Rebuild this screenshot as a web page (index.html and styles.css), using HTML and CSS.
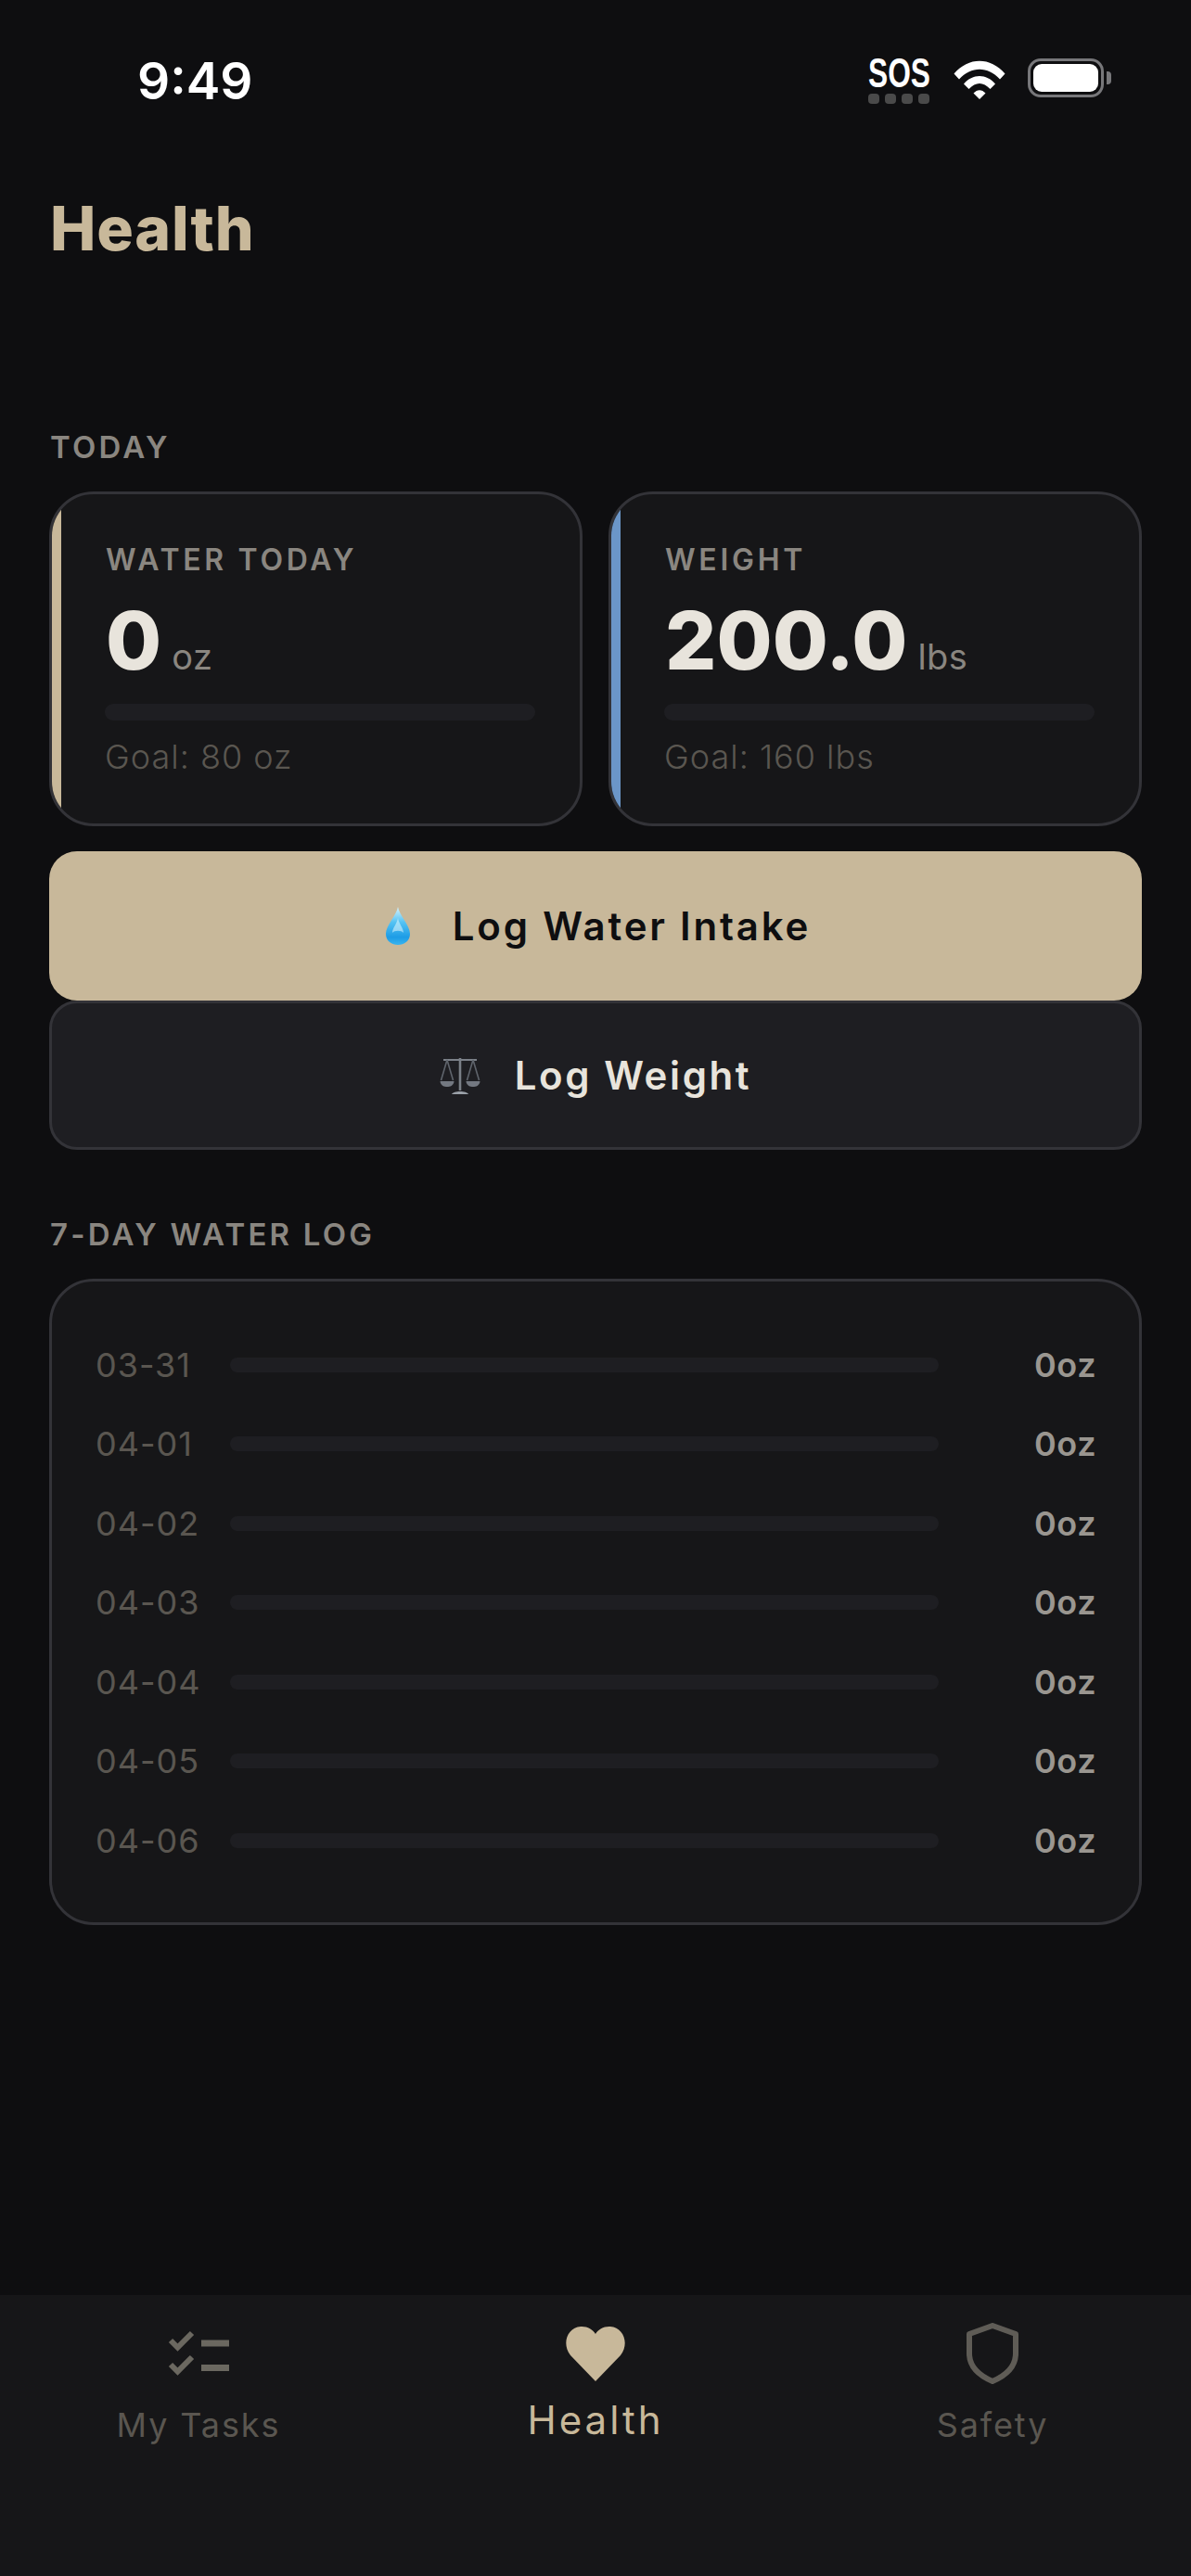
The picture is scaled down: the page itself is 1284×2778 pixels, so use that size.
FILE: index.html
```html
<!DOCTYPE html>
<html lang="en">
<head>
    <meta charset="UTF-8">
    <title>Health</title>
    <link rel="stylesheet" href="styles.css">
</head>
<body>
   <div class="screen">
      <header class="status">
        <span class="time">9:49</span>
        <div class="status-right">
          <div class="sos">
            <span class="sos-text">SOS</span>
            <div class="sos-dots"><i></i><i></i><i></i><i></i></div>
          </div>
          <svg class="wifi" width="56" height="42" viewBox="0 0 56 42">
            <path d="M0.5 14.5 C16 -4 40 -4 55.5 14.5 L50 20.5 C37 6 19 6 6 20.5 Z" fill="#fff"/>
            <path d="M11 25.5 C20.5 14 35.5 14 45 25.5 L39.5 31 C32 23 24 23 16.5 31 Z" fill="#fff"/>
            <path d="M21.5 35.5 C25.5 31 30.5 31 34.5 35.5 L28 42 Z" fill="#fff"/>
          </svg>
          <div class="battery"><div class="battery-fill"></div></div>
          <div class="battery-nub"></div>
        </div>
      </header>

      <h1 class="title">Health</h1>

      <main class="content">
        <h2 class="section-label">TODAY</h2>
        <div class="stats">
          <div class="stat stat-water">
            <div class="stat-label">WATER TODAY</div>
            <div class="stat-value">0<span class="stat-unit">oz</span></div>
            <div class="track"></div>
            <div class="stat-goal">Goal: 80 oz</div>
          </div>
          <div class="stat stat-weight">
            <div class="stat-label">WEIGHT</div>
            <div class="stat-value">200.0<span class="stat-unit">lbs</span></div>
            <div class="track"></div>
            <div class="stat-goal">Goal: 160 lbs</div>
          </div>
        </div>

        <button class="btn btn-primary" type="button">
          <svg width="28" height="42" viewBox="0 0 28 42">
            <defs>
              <linearGradient id="drop" x1="0" y1="0" x2="0" y2="1">
                <stop offset="0" stop-color="#d8f3fd"/>
                <stop offset="0.4" stop-color="#56c3f3"/>
                <stop offset="0.8" stop-color="#1c9ce6"/>
                <stop offset="1" stop-color="#3ab4ee"/>
              </linearGradient>
            </defs>
            <path d="M14 0 C15.500 9 27 20 27 29 C27 36.500 21 41 14 41 C7 41 1 36.500 1 29 C1 20 12.500 9 14 0 Z" fill="url(#drop)"/>
            <path d="M14 12 C15 18 20 23 20 28 C18 25 10 25 8 28 C8 23 13 18 14 12 Z" fill="#e4f7fe" opacity="0.55"/>
          </svg>
          <span>Log Water Intake</span>
        </button>
        <button class="btn btn-secondary" type="button">
          <svg width="44" height="44" viewBox="0 0 44 44" fill="none" stroke="#7b8088" stroke-width="1.6">
            <path d="M22 3 V38" stroke-width="2.600"/>
            <path d="M4 5 H40" stroke-width="2"/>
            <path d="M8 5 L1.500 27 M8 5 L14.500 27 M36 5 L29.500 27 M36 5 L42.500 27" stroke="#5f646c"/>
            <path d="M0.500 28 H15.500 C15 33 11 34 8 34 C5 34 1 33 0.500 28 Z" fill="#737881" stroke="none"/>
            <path d="M28.500 28 H43.500 C43 33 39 34 36 34 C33 34 29 33 28.500 28 Z" fill="#737881" stroke="none"/>
            <path d="M13 42 C15 38 29 38 31 42 Z" fill="#9aa0a8" stroke="none"/>
          </svg>
          <span>Log Weight</span>
        </button>

        <h2 class="section-label section-log">7-DAY WATER LOG</h2>
        <div class="log">
          <div class="log-row"><span class="log-date">03-31</span><div class="log-bar"></div><span class="log-val">0oz</span></div>
          <div class="log-row"><span class="log-date">04-01</span><div class="log-bar"></div><span class="log-val">0oz</span></div>
          <div class="log-row"><span class="log-date">04-02</span><div class="log-bar"></div><span class="log-val">0oz</span></div>
          <div class="log-row"><span class="log-date">04-03</span><div class="log-bar"></div><span class="log-val">0oz</span></div>
          <div class="log-row"><span class="log-date">04-04</span><div class="log-bar"></div><span class="log-val">0oz</span></div>
          <div class="log-row"><span class="log-date">04-05</span><div class="log-bar"></div><span class="log-val">0oz</span></div>
          <div class="log-row"><span class="log-date">04-06</span><div class="log-bar"></div><span class="log-val">0oz</span></div>
        </div>
      </main>

      <nav class="tabs">
        <div class="tab">
          <div class="tab-icon">
            <svg width="68" height="50" viewBox="0 0 68 50" fill="none" stroke="#6b6860" stroke-width="6">
              <path d="M4 11 L11.500 18.500 L27 3"/>
              <path d="M4 37 L11.500 44.500 L27 29"/>
              <path d="M37 14 H67 M37 40.500 H67" stroke-width="7"/>
            </svg>
          </div>
          <span class="tab-label">My Tasks</span>
        </div>
        <div class="tab tab-active">
          <div class="tab-icon">
            <svg width="66" height="60" viewBox="0 0 66 60">
              <path d="M33 60 L6 32 C-4 19 3 2 17 1 C24 0.500 30 4 33 9 C36 4 42 0.500 49 1 C63 2 70 19 60 32 Z" fill="#c8b89a"/>
            </svg>
          </div>
          <span class="tab-label">Health</span>
        </div>
        <div class="tab">
          <div class="tab-icon">
            <svg width="56" height="66" viewBox="0 0 56 66" fill="none" stroke="#5f5c56" stroke-width="6" stroke-linejoin="round">
              <path d="M28 3 L53 12 V33 C53 48 42 57 28 63 C14 57 3 48 3 33 V12 Z"/>
            </svg>
          </div>
          <span class="tab-label">Safety</span>
        </div>
      </nav>
   </div>
</body>
</html>
```

FILE: styles.css
```css
*{
  box-sizing: border-box;
}
body{
  margin: 0;
  background-color: #0e0e10;
  font-family: Inter, "Noto Sans", sans-serif;
}
.screen{
  width: 1284px;
  height: 2778px;
  display: flex;
  flex-direction: column;
  overflow: hidden;
}

/* barre de statut */
.status{
  height: 206px;
  padding: 54px 86px 0 148px;
  display: flex;
  justify-content: space-between;
  align-items: flex-start;
}
.time{
  color: #fff;
  font-size: 55px;
  font-weight: 600;
  line-height: 66px;
}
.status-right{
  display: flex;
  align-items: flex-start;
  padding-top: 9px;
}
.sos{
  width: 70px;
  margin-right: 22px;
}
.sos-text{
  display: block;
  color: #fff;
  font-family: "Liberation Sans", sans-serif;
  font-size: 44px;
  font-weight: 700;
  line-height: 32px;
  white-space: nowrap;
  transform: scaleX(0.72);
  transform-origin: left center;
}
.sos-dots{
  display: flex;
  gap: 6px;
  margin-top: 6px;
}
.sos-dots i{
  width: 12px;
  height: 11px;
  border-radius: 4px;
  background-color: #4a4a4a;
}
.wifi{
  margin-top: 2px;
  margin-right: 24px;
}
.battery{
  width: 82px;
  height: 42px;
  padding: 3px;
  border: 3px solid #77777a;
  border-radius: 14px;
}
.battery-fill{
  height: 30px;
  border-radius: 9px;
  background-color: #fff;
}
.battery-nub{
  width: 5px;
  height: 14px;
  margin: 14px 0 0 3px;
  border-radius: 0 4px 4px 0;
  background-color: #77777a;
}

.title{
  margin: 0;
  padding-left: 54px;
  color: #c8b89a;
  font-size: 66px;
  font-weight: 800;
  line-height: 80px;
  letter-spacing: 0.800px;
}

.content{
  padding: 0 53px;
}
.section-label{
  margin: 0 0 0 1px;
  color: #8a8680;
  font-size: 33px;
  font-weight: 600;
  line-height: 40px;
  letter-spacing: 3.200px;
}
.content > .section-label:first-child{
  margin-top: 176px;
}
.section-log{
  margin-top: 71px;
}

/* cartes */
.stats{
  display: grid;
  grid-template-columns: 1fr 1fr;
  gap: 28px;
  margin-top: 28px;
}
.stat{
  position: relative;
  height: 361px;
  padding: 52px 48px 0 58px;
  overflow: hidden;
  background-color: #161618;
  border: 3px solid #333338;
  border-radius: 48px;
}
.stat::before{
  content: "";
  position: absolute;
  left: 0;
  top: 0;
  bottom: 0;
  width: 10px;
}
.stat-water::before{
  background-color: #c8b89a;
}
.stat-weight::before{
  background-color: #6b96c8;
}
.stat-label{
  color: #8a8680;
  font-size: 32px;
  font-weight: 600;
  line-height: 38px;
  letter-spacing: 3.700px;
}
.stat-value{
  margin-top: 23px;
  color: #e8e4dc;
  font-size: 87px;
  font-weight: 800;
  line-height: 90px;
}
.stat-unit{
  margin-left: 11px;
  color: #8a8680;
  font-size: 38px;
  font-weight: 400;
  letter-spacing: 0.5px;
}
.track{
  height: 18px;
  margin-top: 6px;
  margin-left: -1px;
  border-radius: 9px;
  background-color: #1e1e22;
}
.stat-goal{
  margin-top: 17px;
  margin-left: -1px;
  color: #5a5650;
  font-size: 36px;
  font-weight: 300;
  line-height: 44px;
  letter-spacing: 1px;
}

/* boutons */
.btn{
  display: flex;
  align-items: center;
  justify-content: center;
  gap: 45px;
  width: 100%;
  height: 161px;
  padding: 0 0 0 5px;
  border-radius: 30px;
  font-family: inherit;
  font-size: 42px;
  font-weight: 600;
  letter-spacing: 2.800px;
}
.btn-primary{
  margin-top: 27px;
  color: #0e0e10;
  background-color: #c8b89a;
  border: 0;
}
.btn-secondary{
  gap: 37px;
  padding: 0;
  color: #e8e4dc;
  background-color: #1e1e22;
  border: 3px solid #333338;
  letter-spacing: 2.600px;
}

/* historique */
.log{
  height: 697px;
  margin-top: 28px;
  padding: 47px 46px 46px 47px;
  background-color: #161618;
  border: 3px solid #333338;
  border-radius: 48px;
}
.log-row{
  display: flex;
  align-items: center;
  height: 85.500px;
}
.log-date{
  width: 145px;
  color: #5a5650;
  font-size: 36px;
  letter-spacing: 1px;
}
.log-bar{
  flex: 1;
  height: 16px;
  border-radius: 8px;
  background-color: #1e1e22;
}
.log-val{
  width: 170px;
  color: #9a9690;
  font-size: 36px;
  font-weight: 600;
  text-align: right;
  letter-spacing: 0.5px;
}

/* barre du bas */
.tabs{
  display: grid;
  grid-template-columns: repeat(3, 1fr);
  height: 303px;
  margin-top: auto;
  background-color: #161618;
}
.tab{
  display: flex;
  flex-direction: column;
  align-items: center;
  padding-top: 30px;
  color: #5a5650;
}
.tab-icon{
  display: flex;
  align-items: center;
  justify-content: center;
  height: 66px;
}
.tab-label{
  margin-top: 22px;
  font-size: 36px;
  line-height: 44px;
  letter-spacing: 1.900px;
}
.tab-active{
  color: #c8b89a;
}
.tab-active .tab-label{
  margin-top: 14px;
  font-size: 42px;
  line-height: 50px;
  letter-spacing: 3px;
}
```
